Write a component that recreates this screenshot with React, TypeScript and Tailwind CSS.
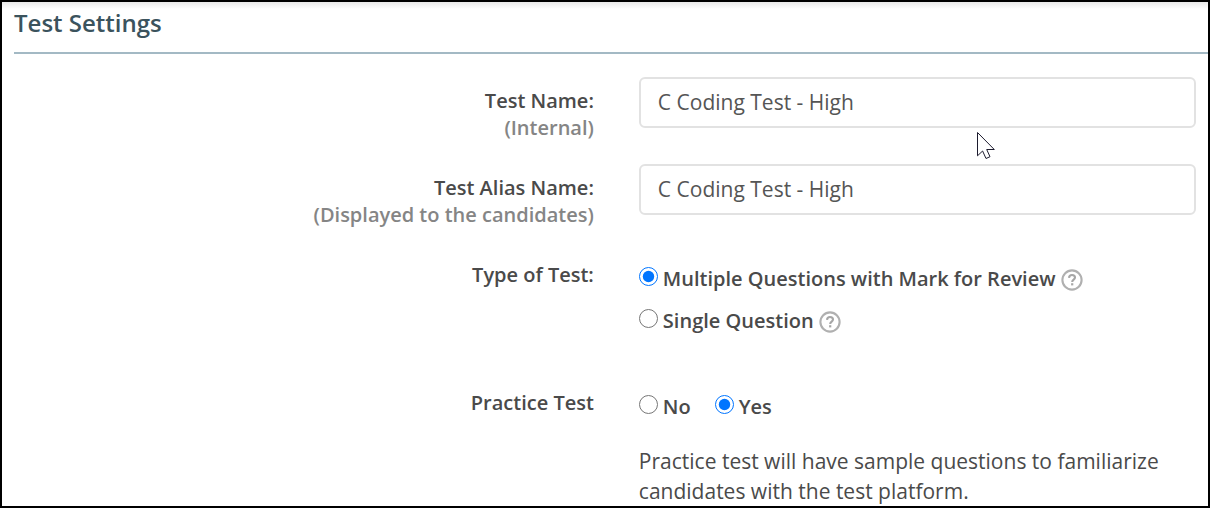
import { useState } from 'react';
import type { ReactNode } from 'react';

const HelpButton = ({ label }: { label: string }) => (
  <button type="button" aria-label={label} className="ml-[5px] mt-[3px] shrink-0">
    <svg width="22" height="22" viewBox="0 0 22 22" fill="none">
      <circle cx="11" cy="11" r="9.6" stroke="#b0b0b0" strokeWidth="2.1" />
      <path
        d="M8 8.8c.2-1.8 1.3-2.8 3-2.8 1.8 0 3 1 3 2.6 0 2-2.8 2.1-2.8 4.3"
        stroke="#a6a6a6"
        strokeWidth="2.1"
      />
      <path d="M10.1 14.2h2.2v2.2h-2.2z" fill="#a6a6a6" />
    </svg>
  </button>
);

const Row = ({ label, children }: { label: ReactNode; children: ReactNode }) => (
  <div className="grid grid-cols-[51fr_49fr] gap-x-[45px] pr-3">
    <div className="pt-[10px] text-right text-[20px] leading-[27px] font-[550]">{label}</div>
    <div className="min-w-0">{children}</div>
  </div>
);

type RadioProps = {
  id: string;
  name: string;
  label: string;
  checked: boolean;
  onChange: () => void;
};

const Radio = ({ id, name, label, checked, onChange }: RadioProps) => (
  <>
    <input
      id={id}
      type="radio"
      name={name}
      checked={checked}
      onChange={onChange}
      className="mb-1 h-[19px] w-[19px] shrink-0 accent-[#0075ff]"
    />
    <label htmlFor={id} className="ml-[5px] text-[20px] leading-[27px] font-[550]">
      {label}
    </label>
  </>
);

const inputClass =
  'block h-[51px] w-full rounded-md border-2 border-[#e2e2e2] bg-white px-[17px] pb-0.5 text-[21px] text-[#555] outline-none';

const Pointer = () => (
  <svg
    className="pointer-events-none absolute top-[130px] left-[975px]"
    width="19"
    height="28"
    viewBox="0 0 19 28"
    aria-hidden="true"
  >
    <path
      d="M.5 .5v23.3l5.1-4.8 3.4 7.5 4-1.8-3.3-7.2h7.6z"
      fill="#fff"
      stroke="#1c1b2e"
      strokeWidth="1"
    />
  </svg>
);

export default function App() {
  const [name, setName] = useState('C Coding Test - High');
  const [alias, setAlias] = useState('C Coding Test - High');
  const [type, setType] = useState('multiple');
  const [practice, setPractice] = useState('yes');

  return (
    <main className="relative h-screen overflow-hidden border-2 border-black bg-white pl-3 font-['Open_Sans','Noto_Sans',sans-serif] text-[#4a4a4a]">
      <div className="-ml-3 h-[7px] bg-gradient-to-b from-[#e9e9e9] to-white" />
      <h1 className="h-[45px] border-b-2 border-[#a3b9c4] text-[24px] leading-[28px] font-semibold text-[#3b535d]">
        Test Settings
      </h1>

      <form className="flex flex-col gap-[23px] pt-[23px]">
        <Row
          label={
            <label htmlFor="test-name">
              Test Name:
              <span className="block text-[#858585]">(Internal)</span>
            </label>
          }
        >
          <input
            id="test-name"
            type="text"
            value={name}
            onChange={(e) => setName(e.target.value)}
            className={inputClass}
          />
        </Row>

        <Row
          label={
            <label htmlFor="test-alias">
              Test Alias Name:
              <span className="block text-[#858585]">(Displayed to the candidates)</span>
            </label>
          }
        >
          <input
            id="test-alias"
            type="text"
            value={alias}
            onChange={(e) => setAlias(e.target.value)}
            className={inputClass}
          />
        </Row>

        <Row label="Type of Test:">
          <div role="radiogroup" aria-label="Type of Test" className="flex flex-col gap-3 pt-3 pb-[21px]">
            <div className="flex h-[30px] items-center">
              <Radio
                id="type-multiple"
                name="type"
                label="Multiple Questions with Mark for Review"
                checked={type === 'multiple'}
                onChange={() => setType('multiple')}
              />
              <HelpButton label="About multiple questions" />
            </div>
            <div className="flex h-[30px] items-center">
              <Radio
                id="type-single"
                name="type"
                label="Single Question"
                checked={type === 'single'}
                onChange={() => setType('single')}
              />
              <HelpButton label="About single question" />
            </div>
          </div>
        </Row>

        <Row label="Practice Test">
          <div role="radiogroup" aria-label="Practice Test" className="flex gap-6 pt-3">
            <div className="flex h-[30px] items-center">
              <Radio
                id="practice-no"
                name="practice"
                label="No"
                checked={practice === 'no'}
                onChange={() => setPractice('no')}
              />
            </div>
            <div className="flex h-[30px] items-center">
              <Radio
                id="practice-yes"
                name="practice"
                label="Yes"
                checked={practice === 'yes'}
                onChange={() => setPractice('yes')}
              />
            </div>
          </div>
          <p className="mt-[25px] text-[21px] leading-[30px]">
            Practice test will have sample questions to familiarize candidates with the test platform.
          </p>
        </Row>
      </form>

      <Pointer />
    </main>
  );
}
